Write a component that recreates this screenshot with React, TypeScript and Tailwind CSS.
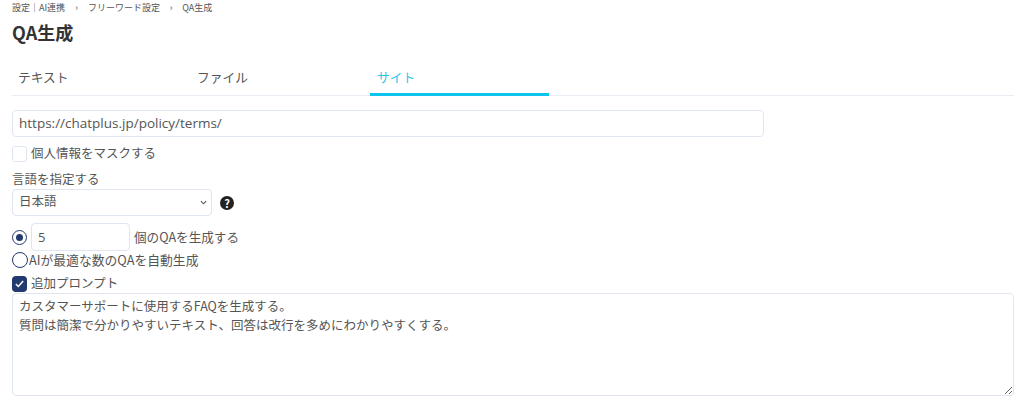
import React, { useState } from "react";

const tabs = ["テキスト", "ファイル", "サイト"];

function Crumbs() {
  return (
    <nav className="flex items-center h-[15px] text-[9px] text-[#555]">
      <span>設定｜AI連携</span>
      <span className="w-[23px] text-center">›</span>
      <span>フリーワード設定</span>
      <span className="w-[22px] text-center">›</span>
      <span>QA生成</span>
    </nav>
  );
}

export default function App() {
  const [activeTab] = useState("サイト");

  return (
    <div
      className="w-[1024px] h-[409px] overflow-hidden bg-white pl-3 pr-[10px] text-[#555] text-[12.5px]"
      style={{ fontFamily: '"Noto Sans CJK JP", "Noto Sans", sans-serif' }}
    >
      <Crumbs />
      <h1 className="mt-[5px] h-[24px] leading-[24px] text-[18px] font-bold text-[#333]">QA生成</h1>

      <div className="mt-[17px] flex h-[35px] border-b border-[#e8edf3]">
        {tabs.map((tab) => (
          <div
            key={tab}
            className={
              tab === activeTab
                ? "w-[179px] h-[35px] pl-[7px] pt-[6px] text-[12.75px] text-[#2cc4ea] border-b-[3px] border-[#0cc4ee]"
                : "w-[179px] pl-[6px] pt-[6px] text-[12.75px] text-[#555]"
            }
          >
            {tab}
          </div>
        ))}
      </div>

      <input
        readOnly
        value="https://chatplus.jp/policy/terms/"
        className="block mt-[14px] w-[752px] h-[27px] px-[6px] pb-[2px] rounded-[4px] border border-[#dfe6f2] text-[13.5px] text-[#555] outline-none"
        style={{ fontFamily: '"Open Sans", sans-serif' }}
      />

      <label className="mt-[8px] h-[17px] flex items-center gap-[4px]">
        <span className="w-[15px] h-[16px] rounded-[3px] border border-[#dfe6f2]" />
        <span>個人情報をマスクする</span>
      </label>

      <div className="mt-[8px] h-[17px] leading-[17px]">言語を指定する</div>

      <div className="mt-[2px] flex items-center">
        <div className="relative w-[200px] h-[27px]">
          <select className="w-full h-full appearance-none rounded-[4px] border border-[#dfe6f2] bg-white px-[6px] pb-[2px] text-[12.5px] text-[#555] outline-none">
            <option>日本語</option>
          </select>
          <svg
            className="absolute right-[5px] top-[11px] w-[7px] h-[5px] text-[#555]"
            viewBox="0 0 8 5"
            fill="none"
            stroke="currentColor"
            strokeWidth="1.3"
          >
            <path d="M1 1l3 3 3-3" />
          </svg>
        </div>
        <span className="ml-[8px] w-[14px] h-[14px] rounded-full bg-[#222] text-white text-[11px] font-bold leading-[14px] text-center">
          ?
        </span>
      </div>

      <div className="mt-[7px] flex items-center h-[28px]">
        <span className="w-[15px] h-[15px] rounded-full border border-[#223a6e] flex items-center justify-center">
          <span className="w-[7px] h-[7px] rounded-full bg-[#223a6e]" />
        </span>
        <input
          readOnly
          value="5"
          className="ml-[4px] w-[99px] h-[28px] px-[6px] rounded-[4px] border border-[#dfe6f2] text-[13px] text-[#555] outline-none"
          style={{ fontFamily: '"Open Sans", sans-serif' }}
        />
        <span className="ml-[4px] text-[12.6px]">個のQAを生成する</span>
      </div>

      <label className="mt-[1px] h-[16px] flex items-center gap-[1px]">
        <span className="w-[16px] h-[16px] rounded-full border border-[#223a6e]" />
        <span className="text-[12.8px]">AIが最適な数のQAを自動生成</span>
      </label>

      <label className="mt-[7px] h-[17px] flex items-center gap-[4px]">
        <span className="w-[15px] h-[16px] rounded-[4px] bg-[#223a6e] flex items-center justify-center">
          <svg className="w-[11px] h-[11px]" viewBox="0 0 12 12" fill="none" stroke="white" strokeWidth="1.6">
            <path d="M2 6.5l2.7 2.7L10 3.2" />
          </svg>
        </span>
        <span>追加プロンプト</span>
      </label>

      <textarea
        readOnly
        value={"カスタマーサポートに使用するFAQを生成する。\n質問は簡潔で分かりやすいテキスト、回答は改行を多めにわかりやすくする。"}
        className="block mt-[1px] w-[1002px] h-[103px] px-[6px] py-[2px] rounded-[4px] border border-[#dfe6f2] text-[12.5px] leading-[19px] text-[#555] outline-none"
      />
    </div>
  );
}
